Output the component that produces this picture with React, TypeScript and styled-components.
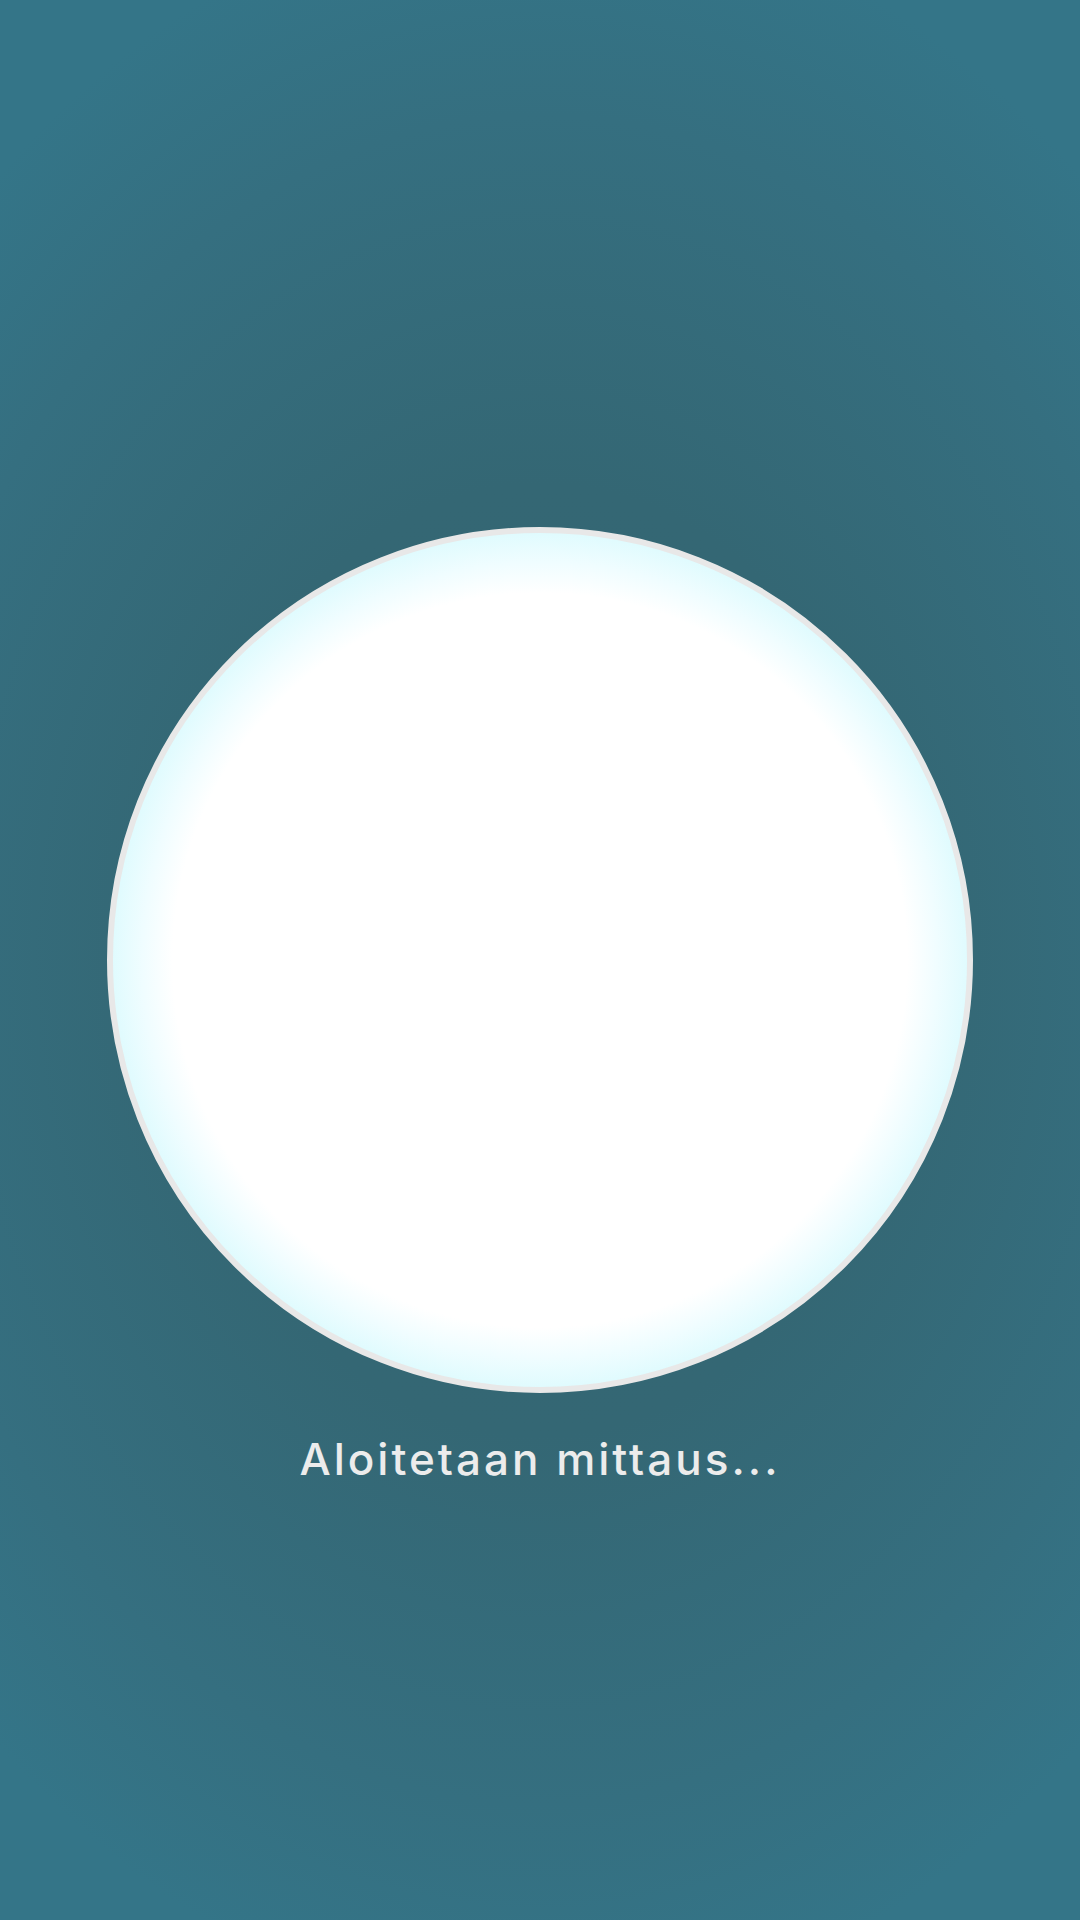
import React from "react";
import styled, { createGlobalStyle } from "styled-components";

const GlobalStyle = createGlobalStyle`
  html, body {
    margin: 0;
    padding: 0;
  }
  body {
    font-family: Inter, "Noto Sans", sans-serif;
  }
`;

const App = () => {
  return (
    <>
      <GlobalStyle />
      <Screen>
        <Spacer />
        <Lens />
        <Footer>
          <Status>Aloitetaan mittaus...</Status>
        </Footer>
      </Screen>
    </>
  );
};

export default App;

const Screen = styled.div`
  width: 1080px;
  height: 1920px;
  display: grid;
  grid-template-rows: 1fr auto 1fr;
  justify-items: center;
  background: radial-gradient(
    ellipse 75% 55% at 50% 50%,
    #346672 0%,
    #346774 45%,
    #356f80 80%,
    #347588 100%
  );
`;

const Spacer = styled.div``;

const Lens = styled.div`
  width: 866px;
  height: 866px;
  box-sizing: border-box;
  border-radius: 50%;
  border: 6px solid #e8e8e8;
  background: radial-gradient(
    circle closest-side at 50% 50%,
    #ffffff 0%,
    #ffffff 86%,
    #f0fdff 93%,
    #e0fbfe 100%
  );
`;

const Footer = styled.div`
  display: flex;
  justify-content: center;
  padding-top: 40px;
`;

const Status = styled.div`
  color: #ececec;
  font-size: 44px;
  font-weight: 500;
  line-height: 1.2;
  letter-spacing: 3px;
`;
